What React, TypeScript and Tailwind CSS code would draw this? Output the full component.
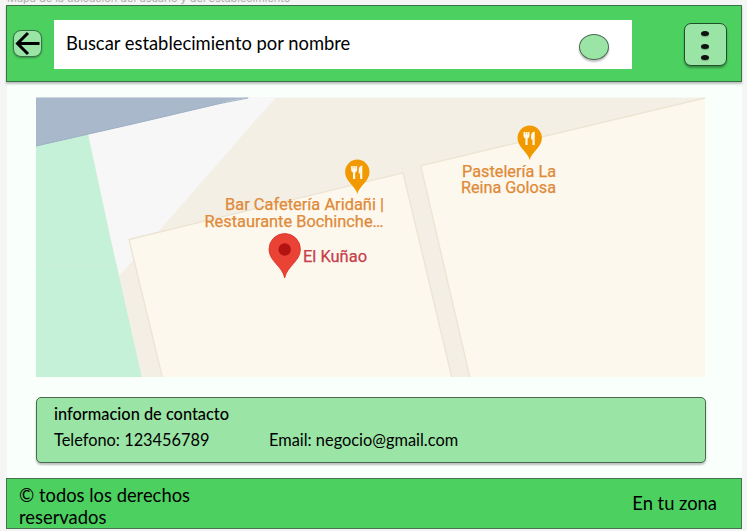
import React from "react";

function FoodPin({ x, y }: { x: number; y: number }) {
  return (
    <g transform={`translate(${x} ${y})`}>
      <path d="M0 22C-1.8 14-12.2 9.5-12.2-.2a12.2 12.2 0 0 1 24.4 0C12.2 9.5 1.8 14 0 22Z" fill="#f29900" />
      <path d="M-6.2-6H-.2V-2.2Q-.2-.2-2.1 .4V7h-2.2V.4Q-6.2-.2-6.2-2.2ZM5-6.4V7H2.8V1.5H1.4V-2.5Q1.8-6 5-6.4Z" fill="#fff8ea" />
      <path d="M-4.3-6v2.4M-2.1-6v2.4" stroke="#f29900" strokeWidth=".5" />
    </g>
  );
}

function Label({ x, y, width, color, children }: { x: number; y: number; width: number; color: string; children: string }) {
  return (
    <text
      x={x}
      y={y}
      textLength={width}
      lengthAdjust="spacingAndGlyphs"
      fill={color}
      stroke={color}
      strokeWidth=".25"
      className="font-['Roboto',sans-serif] text-[16px]"
    >
      {children}
    </text>
  );
}

function StreetMap() {
  return (
    <svg viewBox="36 97 669 280" className="block h-[280px] w-[669px] shrink-0">
      <rect x="36" y="97.6" width="669" height="279.4" fill="#f3efe5" />
      <path d="M36 97.6H276L250 126.5 158 232 119 276 88 134Z" fill="#f7f7f8" />
      <path d="M36 145.5 88 134 109 232 119 276 141.7 377H36Z" fill="#c4f1d7" />
      <path d="M36 97.6H250Q236 99 220 103.5L137 123 36 146Z" fill="#a9b8ca" />
      <path d="M36 146 137 123 220 103.5 248 98" fill="none" stroke="#9eaec4" strokeWidth="1" />
      <path d="M129 239.5 403 172.8 452 378H162.5Z" fill="#fdf8ed" stroke="#ede5d4" strokeWidth="1.4" />
      <path d="M706 97.8 420.8 165.8 470 378H706Z" fill="#fdf8ed" />
      <path d="M705 98 420.8 165.8 470 378" fill="none" stroke="#ede5d4" strokeWidth="1.4" />
      <path d="M36 264.5H116" stroke="#caf0da" strokeWidth="1.5" />
      <FoodPin x={357.3} y={172} />
      <FoodPin x={529.7} y={138} />
      <path d="M284.7 278C282.5 266 269 261.5 269 249.2a15.7 15.7 0 0 1 31.4 0C300.4 261.5 287 266 284.7 278Z" fill="#ea4335" stroke="#d33228" strokeWidth=".8" />
      <circle cx="284.7" cy="249.5" r="6.2" fill="#b31412" />
      <Label x={225} y={210} width={159} color="#df8a38">Bar Cafetería Aridañi |</Label>
      <Label x={204.5} y={227.3} width={179} color="#df8a38">Restaurante Bochinche…</Label>
      <Label x={303} y={262.3} width={64} color="#c5404b">El Kuñao</Label>
      <Label x={462} y={176.7} width={94} color="#df8a38">Pastelería La</Label>
      <Label x={461} y={193} width={95} color="#df8a38">Reina Golosa</Label>
    </svg>
  );
}

export default function App() {
  return (
    <div className="flex h-[531px] w-[747px] flex-col overflow-hidden bg-[#f5f5f5] pl-[7px] font-['Lato',sans-serif] text-black">
      <div className="flex h-[5px] shrink-0 items-end">
        <p className="w-max font-['Inter',sans-serif] text-[10.95px] leading-[14px] whitespace-nowrap text-[#adadad]">
          Mapa de la ubicacion del usuario y del establecimiento
        </p>
      </div>
      <div className="flex h-[524px] w-[735px] shrink-0 flex-col bg-[#f9fffb]">
        <header className="-ml-px flex h-[77px] w-[736px] shrink-0 items-start border border-[#3c7049] bg-[#4cd060] shadow-[0_2px_2px_rgba(0,0,0,0.25)]">
          <button className="mt-[24px] ml-[6px] flex h-[27px] w-[29px] items-center justify-center rounded-[8px] border border-[#397447] bg-[#9ae4a5] shadow-[0_1px_2px_rgba(0,0,0,0.3)]" aria-label="Volver">
            <svg viewBox="0 0 26 25" className="h-[25px] w-[26px] shrink-0 overflow-visible">
              <path d="M24.5 12.5H3M13 2 2.5 12.5 13 23" fill="none" stroke="#000" strokeWidth="3" />
            </svg>
          </button>
          <div className="mt-[14px] ml-[12px] flex h-[49px] w-[578px] items-center bg-white pl-[12px]">
            <span className="w-[513px] pb-[4px] text-[18.36px] leading-[22px] whitespace-nowrap">Buscar establecimiento por nombre</span>
            <span className="mt-[5px] h-[26px] w-[30px] shrink-0 rounded-[50%] border border-[#4c6b52] bg-[#9ae4a5] shadow-[0_2px_2px_rgba(0,0,0,0.25)]" />
          </div>
          <button className="mt-[17px] ml-[52px] flex h-[43px] w-[43px] flex-col items-center rounded-[7px] border border-[#214f2b] bg-[#9ae4a5] pt-[7px] pr-[2px] shadow-[0_2px_2px_rgba(0,0,0,0.3)]" aria-label="Menú">
            <span className="h-[5px] w-[8px] rounded-[50%] bg-[#111] shadow-[0_1px_1px_rgba(0,0,0,0.25)]" />
            <span className="mt-[8px] h-[5px] w-[8px] rounded-[50%] bg-[#111] shadow-[0_1px_1px_rgba(0,0,0,0.25)]" />
            <span className="mt-[6px] h-[5px] w-[8px] rounded-[50%] bg-[#111] shadow-[0_1px_1px_rgba(0,0,0,0.25)]" />
          </button>
        </header>
        <main className="flex h-[396px] shrink-0 flex-col pt-[15px] pl-[29px]">
          <StreetMap />
          <section className="mt-[20px] h-[66px] w-[670px] rounded-[5px] border border-[#4a6951] bg-[#9ae4a5] pt-[6px] pl-[17px] shadow-[0_2px_2px_rgba(0,0,0,0.25)]">
            <h2 className="text-[16.38px] leading-[20px] font-medium">informacion de contacto</h2>
            <div className="mt-[6px] flex text-[16.36px] leading-[20px] whitespace-nowrap">
              <span className="w-[215px]">Telefono: 123456789</span>
              <span>Email: negocio@gmail.com</span>
            </div>
          </section>
        </main>
        <footer className="-ml-px flex h-[51px] w-[736px] shrink-0 justify-between border border-[#46704f] bg-[#4cd060] pr-[24px] pl-[12px] text-[18.36px]">
          <p className="w-[190px] pt-[5px] leading-[22px]">© todos los derechos reservados</p>
          <p className="pt-[13px] leading-[22px]">En tu zona</p>
        </footer>
      </div>
    </div>
  );
}
